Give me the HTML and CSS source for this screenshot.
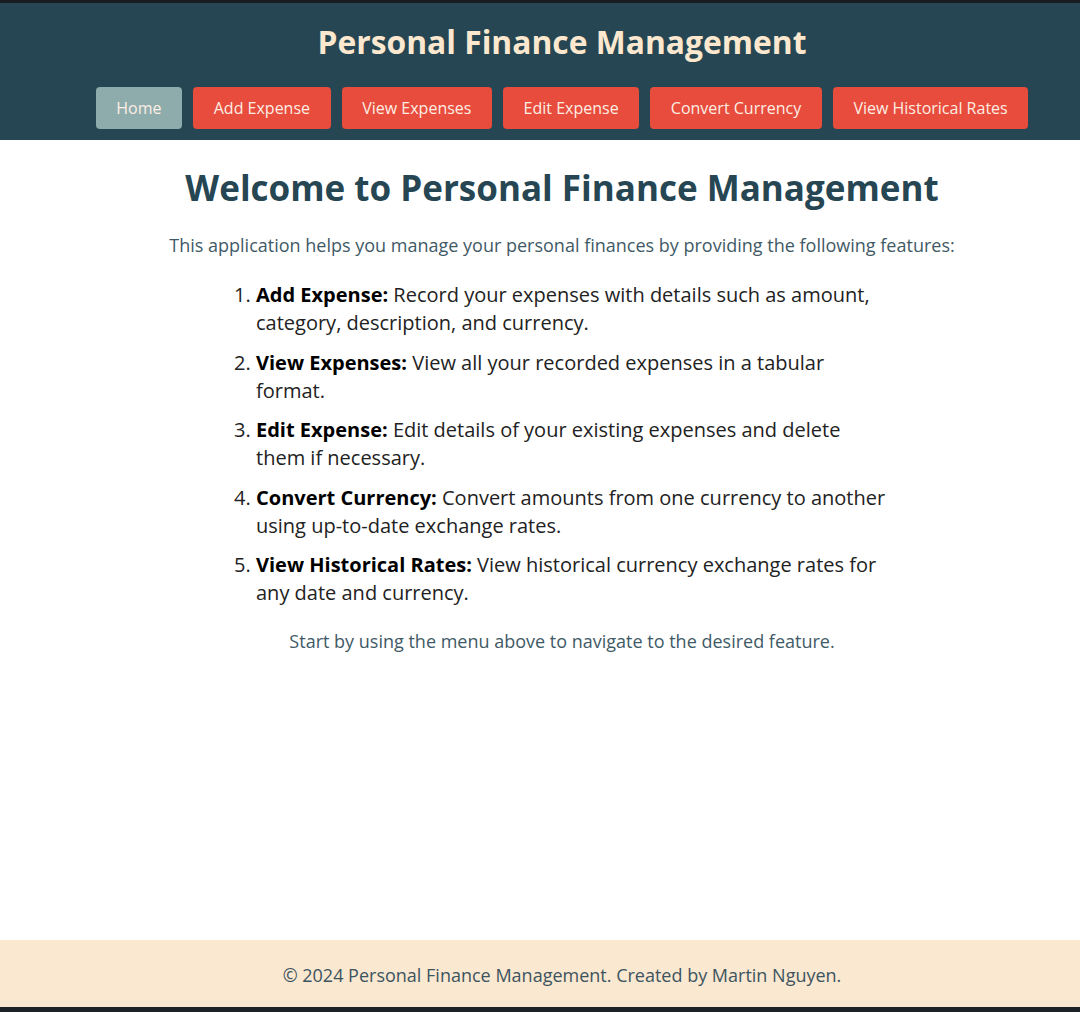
FILE: index.html
```html
<!DOCTYPE html>
<html lang="en">
<head>
<meta charset="utf-8">
<title>Personal Finance Management</title>
<link rel="stylesheet" href="styles.css">
</head>
<body>
<div class="page">
  <header class="site-header">
    <h1 class="site-title">Personal Finance Management</h1>
    <nav class="nav">
      <a class="nav-btn active" href="#">Home</a>
      <a class="nav-btn" href="#">Add Expense</a>
      <a class="nav-btn" href="#">View Expenses</a>
      <a class="nav-btn" href="#">Edit Expense</a>
      <a class="nav-btn" href="#">Convert Currency</a>
      <a class="nav-btn" href="#">View Historical Rates</a>
    </nav>
  </header>
  <main class="content">
    <h2 class="welcome">Welcome to Personal Finance Management</h2>
    <p class="intro">This application helps you manage your personal finances by providing the following features:</p>
    <ol class="features">
      <li><strong>Add Expense:</strong> Record your expenses with details such as amount, category, description, and currency.</li>
      <li><strong>View Expenses:</strong> View all your recorded expenses in a tabular format.</li>
      <li><strong>Edit Expense:</strong> Edit details of your existing expenses and delete them if necessary.</li>
      <li><strong>Convert Currency:</strong> Convert amounts from one currency to another using up-to-date exchange rates.</li>
      <li><strong>View Historical Rates:</strong> View historical currency exchange rates for any date and currency.</li>
    </ol>
    <p class="outro">Start by using the menu above to navigate to the desired feature.</p>
  </main>
  <footer class="site-footer">
    <p class="footer-text">&copy; 2024 Personal Finance Management. Created by Martin Nguyen.</p>
  </footer>
</div>
</body>
</html>
```
FILE: styles.css
```css
* { box-sizing: border-box; }
html, body { margin: 0; padding: 0; }
body {
  font-family: "Open Sans", "Noto Sans", sans-serif;
  background: #ffffff;
}
.page {
  min-height: 100vh;
  display: flex;
  flex-direction: column;
  border-top: 3px solid #171c21;
  border-bottom: 5px solid #1d2226;
}
.site-header {
  background: #264653;
  padding: 18px 0 11px 44px;
  display: flex;
  flex-direction: column;
  align-items: center;
}
.site-title {
  margin: 0;
  color: #fce8cf;
  font-size: 31.8px;
  font-weight: 700;
  line-height: 42px;
}
.nav {
  margin-top: 24px;
  display: flex;
  gap: 11px;
}
.nav-btn {
  display: block;
  height: 42px;
  line-height: 42px;
  padding: 0 20.6px;
  background: #e74c3c;
  color: #fdeee4;
  text-decoration: none;
  font-size: 16px;
  border-radius: 4px;
}
.nav-btn.active {
  background: #8eacac;
}
.content {
  flex: 1;
  padding: 18px 0 0 44px;
  display: flex;
  flex-direction: column;
  align-items: center;
}
.welcome {
  margin: 0;
  color: #264653;
  font-size: 35px;
  font-weight: 700;
  line-height: 60px;
}
.intro {
  margin: 15px 0 0;
  color: #3f5a66;
  font-size: 18px;
  line-height: 24px;
}
.features {
  margin: 24px 0 0;
  padding: 0 16px 0 40px;
  width: 692px;
  color: #222;
  font-size: 20px;
  line-height: 28px;
}
.features li {
  margin-bottom: 11.6px;
}
.features strong { color: #000; }
.outro {
  margin: 10px 0 0;
  color: #3f5a66;
  font-size: 18px;
  line-height: 24px;
}
.site-footer {
  background: #fae8d0;
  height: 67px;
  padding-left: 44px;
  display: flex;
  align-items: center;
  justify-content: center;
}
.footer-text {
  margin: 2px 0 0;
  color: #3d5460;
  font-size: 18px;
}
```
